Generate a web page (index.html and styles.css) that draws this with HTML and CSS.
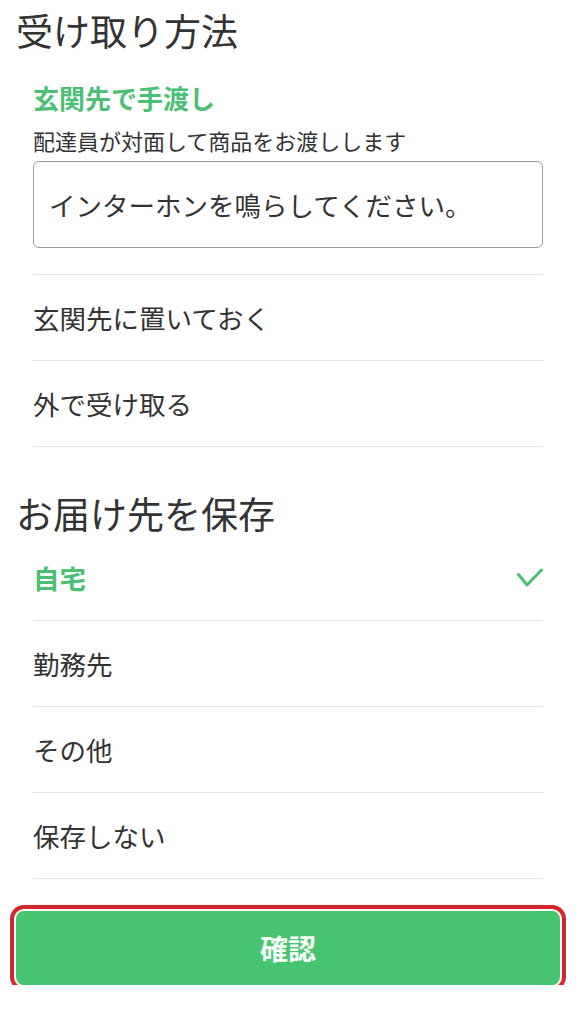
FILE: index.html
```html
<!DOCTYPE html>
<html lang="ja">
<head>
    <meta charset="UTF-8">
    <meta name="viewport" content="width=device-width, initial-scale=1.0">
    <title>受け取り方法</title>
    <link rel="stylesheet" href="styles.css">
</head>
<body>
    <section class="block">
        <h2 class="block-title">受け取り方法</h2>
        <ul class="options">
            <li class="option option-open">
                <p class="option-name">玄関先で手渡し</p>
                <p class="option-desc">配達員が対面して商品をお渡しします</p>
                <div class="note">インターホンを鳴らしてください。</div>
            </li>
            <li class="option">玄関先に置いておく</li>
            <li class="option">外で受け取る</li>
        </ul>
    </section>

    <section class="block block-save">
        <h2 class="block-title">お届け先を保存</h2>
        <ul class="places">
            <li class="place place-on">
                <span>自宅</span>
                <svg class="check" width="26" height="20" viewBox="0 0 26 20">
                    <polyline points="1.5,6.5 10,17 24.5,2" fill="none" stroke="#48bf72" stroke-width="3" stroke-linecap="round" stroke-linejoin="round"/>
                </svg>
            </li>
            <li class="place">勤務先</li>
            <li class="place">その他</li>
            <li class="place">保存しない</li>
        </ul>
    </section>

    <div class="actions">
        <button class="btn-ok" type="button">確認</button>
    </div>
</body>
</html>
```

FILE: styles.css
```css
body {
    margin: 0;
    font-family: "Noto Sans CJK JP", "Noto Sans", sans-serif;
    color: #333333;
    background: #ffffff;
}

ul, p {
    margin: 0;
    padding: 0;
    list-style: none;
}

.block-title {
    margin: 8px 0 0 16px;
    font-size: 37px;
    font-weight: 400;
    line-height: 44px;
    color: #333333;
}

/* 受け取り方法 */
.options {
    margin: 0 33px;
}

.option {
    height: 86px;
    box-sizing: border-box;
    border-top: 1px solid #e4e4e4;
    display: flex;
    align-items: center;
    font-size: 26.5px;
}

.option:last-child {border-bottom: 1px solid #e4e4e4; height: 87px;}

.option-open {
    display: block;
    height: auto;
    border-top: none;
    padding: 28px 0 26px;
}

.option-name {
    font-size: 26px;
    font-weight: 700;
    line-height: 36px;
    color: #4bbf74;
}

.option-desc {
    margin-top: 9px;
    font-size: 22px;
    line-height: 30px;
}

.note {
    margin-top: 6px;
    height: 87px;
    box-sizing: border-box;
    border: 1.5px solid #9a9a9a;
    border-radius: 6px;
    padding: 0 15px;
    display: flex;
    align-items: center;
    font-size: 26.5px;
}

/* お届け先を保存 */
.block-save .block-title {margin-top: 44px;}

.places {
    margin: 0 33px;
}

.place {
    height: 86px;
    box-sizing: border-box;
    border-bottom: 1px solid #e4e4e4;
    display: flex;
    align-items: center;
    justify-content: space-between;
    font-size: 26.5px;
}

.place-on {color: #4bbf74; font-weight: 700;}

/* 確認 ボタン */
.actions {
    padding: 32px 16px 0;
}

.btn-ok {
    display: block;
    width: 100%;
    height: 74px;
    border: none;
    border-radius: 8px;
    background: #46c46f;
    color: #f6fff8;
    font-family: inherit;
    font-size: 28px;
    font-weight: 700;
    box-shadow: 0 0 0 2px #ffffff, 0 0 0 6px #d3262d;
}
```
